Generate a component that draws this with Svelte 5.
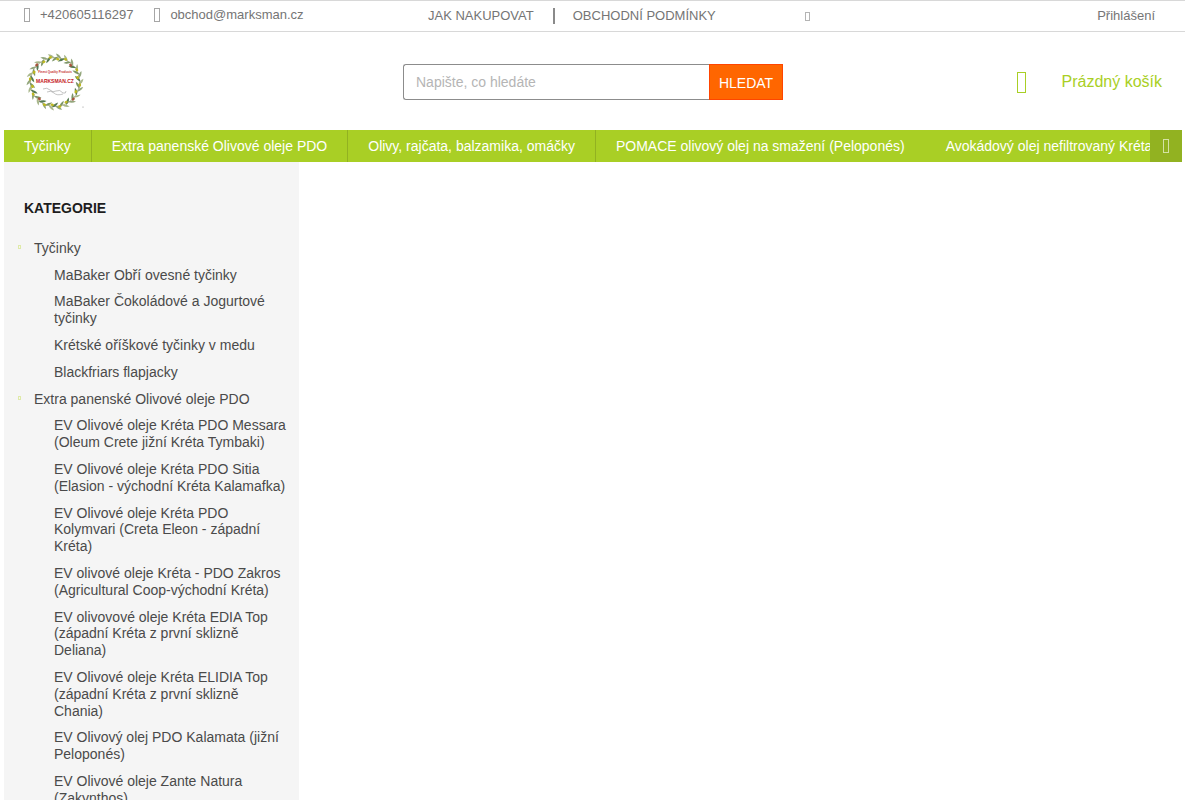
<script>
	const infoLinks = ['Jak nakupovat', 'Obchodní podmínky'];

	const menu = [
		'Tyčinky',
		'Extra panenské Olivové oleje PDO',
		'Olivy, rajčata, balzamika, omáčky',
		'POMACE olivový olej na smažení (Peloponés)',
		'Avokádový olej nefiltrovaný Kréta'
	];

	const categories = [
		{
			name: 'Tyčinky',
			items: [
				'MaBaker Obří ovesné tyčinky',
				'MaBaker Čokoládové a Jogurtové tyčinky',
				'Krétské oříškové tyčinky v medu',
				'Blackfriars flapjacky'
			]
		},
		{
			name: 'Extra panenské Olivové oleje PDO',
			items: [
				'EV Olivové oleje Kréta PDO Messara (Oleum Crete jižní Kréta Tymbaki)',
				'EV Olivové oleje Kréta PDO Sitia (Elasion - východní Kréta Kalamafka)',
				'EV Olivové oleje Kréta PDO Kolymvari (Creta Eleon - západní Kréta)',
				'EV olivové oleje Kréta - PDO Zakros (Agricultural Coop-východní Kréta)',
				'EV olivovové oleje Kréta EDIA Top (západní Kréta z první sklizně Deliana)',
				'EV Olivové oleje Kréta ELIDIA Top (západní Kréta z první sklizně Chania)',
				'EV Olivový olej PDO Kalamata (jižní Peloponés)',
				'EV Olivové oleje Zante Natura (Zakynthos)'
			]
		}
	];

	// olive wreath: leaves alternate between the inner and outer side of the ring
	const leafColors = ['#7d9568', '#93a67c', '#557a52', '#a9b78c'];
	const leaves = Array.from({ length: 44 }, (_, i) => ({
		angle: (i * 360) / 44,
		tilt: i % 2 ? 38 : -38,
		radius: i % 2 ? 26 : 23,
		color: leafColors[i % 4]
	}));
	const olives = Array.from({ length: 20 }, (_, i) => ({
		angle: i * 18 + 7,
		radius: i % 2 ? 25 : 23,
		color: i % 5 === 2 ? '#a8553c' : '#bdb820'
	}));

	let query = $state('');
</script>

<div class="page">
	<div class="top-bar">
		<div class="contacts">
			<a href="tel:+420605116297">
				<svg width="6" height="16" aria-hidden="true"><rect x="0.5" y="1.5" width="5" height="13" /></svg>
				+420605116297
			</a>
			<a href="mailto:obchod@marksman.cz">
				<svg width="6" height="16" aria-hidden="true"><rect x="0.5" y="1.5" width="5" height="13" /></svg>
				obchod@marksman.cz
			</a>
		</div>
		<div class="info">
			<nav class="info-links">
				{#each infoLinks as link}
					<a href="/">{link}</a>
				{/each}
			</nav>
			<button class="more" aria-label="Více">
				<svg width="5" height="10" aria-hidden="true"><rect x="0.5" y="0.5" width="4" height="8" /></svg>
			</button>
		</div>
		<a class="login" href="/login">Přihlášení</a>
	</div>

	<div class="wrap">
		<header class="header">
			<a href="/" class="logo" aria-label="Marksman.cz">
				<svg width="64" height="60" viewBox="-32 -30 64 60">
					<circle r="24.5" fill="none" stroke="#a9a386" stroke-width="0.8" />
					{#each leaves as leaf}
						<path
							d="M-4 0Q0 -2.4 4 0Q0 2 -4 0Z"
							fill={leaf.color}
							transform="rotate({leaf.angle}) translate(0 {-leaf.radius}) rotate({leaf.tilt})"
						/>
					{/each}
					{#each olives as olive}
						<ellipse
							rx="1.7"
							ry="1.3"
							fill={olive.color}
							transform="rotate({olive.angle}) translate(0 {-olive.radius})"
						/>
					{/each}
					<text class="tagline" y="-9" text-anchor="middle">Finest Quality Products</text>
					<text class="brand" y="1" text-anchor="middle">MARKSMAN.CZ</text>
					<path
						d="M-12 7q4 -2 7 1t6 1q4 -2 7 2q3 1 3 -2M-8 10q4 -2 7 1t9 1"
						fill="none"
						stroke="#9a9a9a"
						stroke-width="0.6"
					/>
					<circle cx="28" cy="25" r="0.5" fill="#777" />
				</svg>
			</a>

			<form class="search" onsubmit={(e) => e.preventDefault()}>
				<input type="search" bind:value={query} placeholder="Napište, co hledáte" aria-label="Hledat" />
				<button>HLEDAT</button>
			</form>

			<a href="/kosik" class="cart">
				<svg width="9" height="22" aria-hidden="true"><rect x="0.5" y="1.5" width="8" height="20" /></svg>
				Prázdný košík
			</a>
		</header>

		<nav class="menu">
			<ul>
				{#each menu as item}
					<li><a href="/">{item}</a></li>
				{/each}
			</ul>
			<button aria-label="Další položky">
				<svg width="8" height="16" aria-hidden="true"><rect x="1.5" y="1.5" width="5" height="13" /></svg>
			</button>
		</nav>

		<aside class="sidebar">
			<h4>Kategorie</h4>
			<ul class="categories">
				{#each categories as category}
					<li>
						<a href="/" class="parent">
							<svg width="4" height="6" aria-hidden="true"><rect x="0.5" y="0.5" width="2" height="3" /></svg>
							{category.name}
						</a>
						<ul>
							{#each category.items as item}
								<li><a href="/">{item}</a></li>
							{/each}
						</ul>
					</li>
				{/each}
			</ul>
		</aside>
	</div>
</div>

<style>
	:global(body) {
		background: #fff;
		font-family: 'Liberation Sans', Arial, sans-serif;
		font-size: 14px;
		line-height: 1.2;
		color: #4a4a4a;
	}

	.page {
		margin-right: 15px;
	}

	.page * {
		box-sizing: border-box;
	}

	a {
		color: inherit;
		text-decoration: none;
	}

	ul {
		list-style: none;
		margin: 0;
		padding: 0;
	}

	button {
		font: inherit;
		padding: 0;
		border: 0;
		background: none;
		cursor: pointer;
	}

	svg {
		flex: none;
	}

	rect {
		fill: none;
		stroke: currentColor;
	}

	.top-bar {
		display: grid;
		grid-template-columns: 404px 377px 1fr;
		align-items: center;
		height: 32px;
		padding: 0 30px 0 24px;
		border-top: 1px solid #d8d8d8;
		border-bottom: 1px solid #d8d8d8;
		font-size: 13px;
		color: #757575;
	}

	.contacts {
		display: flex;
		gap: 21px;
		padding-bottom: 2px;
	}

	.contacts a {
		display: flex;
		align-items: center;
		gap: 10px;
	}

	.contacts rect {
		stroke: #a6a6a6;
	}

	.info {
		display: flex;
		justify-content: space-between;
		align-items: center;
	}

	.info-links {
		display: flex;
		text-transform: uppercase;
	}

	.info-links a + a {
		margin-left: 19px;
		padding-left: 18px;
		border-left: 2px solid #8a8a8a;
	}

	.more {
		display: flex;
		margin-right: -5px;
		padding-top: 2px;
		color: #b4b4b4;
	}

	.login {
		justify-self: end;
	}

	.wrap {
		margin: 0 3px 0 4px;
	}

	.header {
		display: grid;
		grid-template-columns: 1fr 380px 1fr;
		align-items: center;
		height: 98px;
		padding-top: 2px;
	}

	.logo {
		display: flex;
		padding-left: 19px;
	}

	.tagline {
		font-size: 3px;
		font-weight: 700;
		fill: #c8322f;
	}

	.brand {
		font-size: 5px;
		font-weight: 700;
		fill: #c5161d;
	}

	.search {
		display: flex;
		height: 36px;
	}

	.search input {
		flex: 1;
		min-width: 0;
		padding: 0 12px;
		border: 1px solid #8c8c8c;
		border-right: 0;
		border-radius: 3px 0 0 3px;
		font: inherit;
		outline: none;
		appearance: none;
	}

	.search input::placeholder {
		color: #b5b5b5;
	}

	.search button {
		width: 74px;
		padding-top: 2px;
		border: 1px solid #ff4500;
		background: #ff6600;
		color: #fff;
	}

	.cart {
		display: flex;
		justify-self: end;
		align-items: center;
		gap: 36px;
		padding-right: 20px;
		font-size: 16px;
		color: #a9cf25;
	}

	.cart rect {
		stroke: #a9cf25;
	}

	.menu {
		display: flex;
		height: 32px;
		background: #a9cf25;
		color: #fff;
	}

	.menu ul {
		display: flex;
		flex: 1;
		min-width: 0;
		overflow: hidden;
	}

	.menu li {
		flex: none;
		padding: 0 20px;
		line-height: 32px;
		border-right: 1px solid #92b221;
	}

	.menu li:nth-child(n + 4) {
		border-color: transparent;
	}

	.menu button {
		display: flex;
		justify-content: center;
		align-items: center;
		width: 32px;
		background: #92b221;
		color: #d5e2a4;
	}

	.sidebar {
		width: 25%;
		padding: 38px 10px 20px 14px;
		background: #f5f5f5;
	}

	h4 {
		margin: 0 0 18px;
		padding-left: 6px;
		font-size: 14px;
		text-transform: uppercase;
		color: #1d1d1d;
	}

	.categories a {
		display: block;
		padding: 5px 0;
	}

	.categories .parent {
		display: flex;
		align-items: center;
		gap: 12px;
	}

	.parent rect {
		stroke: #dfeaa8;
	}

	.categories ul {
		padding-left: 36px;
	}
</style>
